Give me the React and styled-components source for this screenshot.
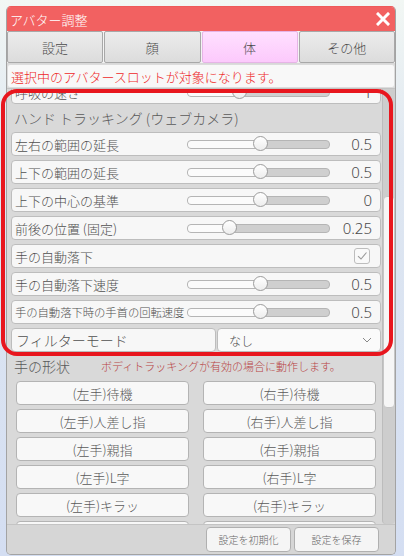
import React from 'react';
import styled, { createGlobalStyle, css } from 'styled-components';

const FONT = '"Noto Sans CJK JP", "Noto Sans", sans-serif';

const GlobalStyle = createGlobalStyle`
  html, body {
    margin: 0;
    padding: 0;
  }
  body {
    font-family: ${FONT};
    font-weight: 300;
    background: linear-gradient(180deg, #f2f7f4 0%, #dfe7f1 28%, #d4def2 100%);
  }
`;

const tabs = ['設定', '顔', '体', 'その他'];

const trackingRows = [
  { label: '左右の範囲の延長', pos: 0.5, value: '0.5' },
  { label: '上下の範囲の延長', pos: 0.5, value: '0.5' },
  { label: '上下の中心の基準', pos: 0.5, value: '0' },
  { label: '前後の位置 (固定)', pos: 0.265, value: '0.25' },
  { label: '手の自動落下', check: true },
  { label: '手の自動落下速度', pos: 0.5, value: '0.5' },
  { label: '手の自動落下時の手首の回転速度', pos: 0.5, value: '0.5', small: true },
];

const handShapes = ['待機', '人差し指', '親指', 'L字', 'キラッ', 'グー'];

const Slider = ({ pos }) => (
  <Track>
    <TrackFill style={{ width: `${7 + pos * 129}px` }} />
    <Knob style={{ left: `${pos * 129}px` }} />
  </Track>
);

const App = () => {
  return (
    <Page>
      <GlobalStyle />
      <Window>
        <TitleBar>
          <Title>アバター調整</Title>
          <Close>
            <svg width="14" height="14" viewBox="0 0 14 14">
              <path d="M2 2 L12 12 M12 2 L2 12" stroke="#fff" strokeWidth="3" strokeLinecap="square" />
            </svg>
          </Close>
        </TitleBar>
        <TabBar>
          {tabs.map((t) => (
            <Tab key={t} $active={t === '体'}>{t}</Tab>
          ))}
        </TabBar>
        <Notice>選択中のアバタースロットが対象になります。</Notice>
        <Body>
          <Scroll>
            <Content>
              <Row>
                <Label>呼吸の速さ</Label>
                <Slider pos={0.34} />
                <Value>1</Value>
              </Row>
              <SectionHeader>ハンド トラッキング (ウェブカメラ)</SectionHeader>
              {trackingRows.map((r) => (
                <Row key={r.label}>
                  <Label $small={r.small}>{r.label}</Label>
                  {r.check ? (
                    <CheckCell>
                      <CheckBox>
                        <svg width="12" height="12" viewBox="0 0 12 12">
                          <path d="M2 6.2 L5 9 L10.5 2.5" fill="none" stroke="#9a9a9a" strokeWidth="1.1" />
                        </svg>
                      </CheckBox>
                    </CheckCell>
                  ) : (
                    <>
                      <Slider pos={r.pos} />
                      <Value>{r.value}</Value>
                    </>
                  )}
                </Row>
              ))}
              <SelectRow>
                <SelectLabel>フィルターモード</SelectLabel>
                <Select>
                  <span>なし</span>
                  <svg width="10" height="6" viewBox="0 0 10 6">
                    <path d="M1 1 L5 5 L9 1" fill="none" stroke="#888" strokeWidth="1" />
                  </svg>
                </Select>
              </SelectRow>
              <SectionHeader $tight>
                手の形状
                <HeaderNote>ボディトラッキングが有効の場合に動作します。</HeaderNote>
              </SectionHeader>
              <ButtonGrid>
                {handShapes.map((s) => (
                  <React.Fragment key={s}>
                    <ShapeButton>(左手){s}</ShapeButton>
                    <ShapeButton>(右手){s}</ShapeButton>
                  </React.Fragment>
                ))}
              </ButtonGrid>
            </Content>
          </Scroll>
          <ScrollBar>
            <ScrollThumb />
          </ScrollBar>
        </Body>
        <Footer>
          <FooterButton>設定を初期化</FooterButton>
          <FooterButton>設定を保存</FooterButton>
        </Footer>
      </Window>
      <Annotation />
    </Page>
  );
};

const Page = styled.div`
  position: relative;
  width: 404px;
  height: 556px;
  overflow: hidden;
  padding: 6px 0 0 6px;
  box-sizing: border-box;
`;

const Window = styled.div`
  width: 390px;
  box-sizing: border-box;
  border: 1px solid #a3a3a3;
  border-top-color: #ee5a5a;
  border-radius: 5px;
  overflow: hidden;
  background: #d8d8d8;
  display: flex;
  flex-direction: column;
`;

const TitleBar = styled.div`
  height: 24px;
  background: #f26161;
  display: flex;
  align-items: center;
  justify-content: space-between;
  padding: 0 5px 0 3px;
`;

const Title = styled.div`
  color: #fff;
  font-size: 13px;
  line-height: 1;
`;

const Close = styled.div`
  display: flex;
  align-items: center;
`;

const TabBar = styled.div`
  display: grid;
  grid-template-columns: repeat(4, 1fr);
  gap: 1px;
  height: 32px;
  background: #f4f4f4;
`;

const Tab = styled.div`
  display: flex;
  align-items: center;
  justify-content: center;
  font-size: 13px;
  color: #4a4a4a;
  border: 1px solid #a8a8a8;
  border-radius: 2px;
  background: linear-gradient(180deg, #ececec 0%, #dcdcdc 100%);
  ${(p) =>
    p.$active &&
    css`
      background: linear-gradient(180deg, #ffe0ff 0%, #fcc9fc 100%);
      border-color: #e6b4e6;
    `}
`;

const Notice = styled.div`
  margin-top: 1px;
  height: 24px;
  box-sizing: border-box;
  background: #f8f8f8;
  border: 1px solid #dcdcdc;
  border-radius: 3px;
  display: flex;
  align-items: center;
  padding-left: 3px;
  font-size: 13px;
  color: #ee2a2a;
  white-space: nowrap;
`;

const Body = styled.div`
  height: 435px;
  display: flex;
  border-top: 1px solid #c4c4c4;
`;

const Scroll = styled.div`
  width: 375px;
  overflow: hidden;
  background: #d9d9d9;
`;

const Content = styled.div`
  margin-top: -9px;
  padding: 0 1px 0 4px;
  display: flex;
  flex-direction: column;
  gap: 4px;
`;

const rowBox = css`
  height: 24px;
  box-sizing: border-box;
  border: 1px solid #bdbdbd;
  border-radius: 4px;
  background: #f7f7f7;
`;

const Row = styled.div`
  ${rowBox};
  display: grid;
  grid-template-columns: 172px 143px 1fr;
  align-items: center;
  padding: 0 8px 0 3px;
`;

const Label = styled.div`
  font-size: ${(p) => (p.$small ? '11.4px' : '13px')};
  color: #505050;
  white-space: nowrap;
  letter-spacing: ${(p) => (p.$small ? '-0.1px' : '0')};
`;

const Value = styled.div`
  text-align: right;
  font-size: 15px;
  color: #4a4a4a;
  font-family: "Noto Sans", "DejaVu Sans", sans-serif;
  font-weight: 300;
`;

const Track = styled.div`
  position: relative;
  height: 7px;
  border: 1px solid #b5b5b5;
  border-radius: 4px;
  background: #cfcfcf;
`;

const TrackFill = styled.div`
  height: 100%;
  border-radius: 4px 0 0 4px;
  background: #fbfbfb;
`;

const Knob = styled.div`
  position: absolute;
  top: -5px;
  width: 15px;
  height: 15px;
  box-sizing: border-box;
  border-radius: 50%;
  border: 1px solid #9c9c9c;
  background: linear-gradient(180deg, #ffffff 0%, #ededed 100%);
`;

const CheckCell = styled.div`
  grid-column: 2 / 4;
  display: flex;
  justify-content: flex-end;
  padding-right: 2px;
`;

const CheckBox = styled.div`
  width: 16px;
  height: 16px;
  box-sizing: border-box;
  border: 1px solid #bdbdbd;
  border-radius: 3px;
  background: #f9f9f9;
  display: flex;
  align-items: center;
  justify-content: center;
`;

const SelectRow = styled.div`
  display: flex;
  gap: 1px;
  height: 24px;
`;

const SelectLabel = styled.div`
  ${rowBox};
  width: 205px;
  display: flex;
  align-items: center;
  padding-left: 4px;
  font-size: 14px;
  color: #505050;
`;

const Select = styled.div`
  ${rowBox};
  flex: 1;
  background: #fafafa;
  display: flex;
  align-items: center;
  justify-content: space-between;
  padding: 0 8px 0 11px;
  font-size: 12px;
  color: #4a4a4a;
`;

const SectionHeader = styled.div`
  height: 20px;
  display: flex;
  align-items: center;
  padding-left: 3px;
  font-size: 14px;
  color: #5a5a5a;
  white-space: nowrap;
  margin-bottom: ${(p) => (p.$tight ? '1px' : '0')};
`;

const HeaderNote = styled.span`
  margin-left: 31px;
  font-size: 11px;
  color: #b84444;
`;

const ButtonGrid = styled.div`
  display: grid;
  grid-template-columns: 1fr 1fr;
  column-gap: 14px;
  row-gap: 4px;
  padding: 0 5px;
`;

const ShapeButton = styled.div`
  height: 24px;
  box-sizing: border-box;
  border: 1px solid #b4b4b4;
  border-radius: 4px;
  background: #f8f8f8;
  display: flex;
  align-items: center;
  justify-content: center;
  font-size: 13px;
  color: #5a5a5a;
`;

const ScrollBar = styled.div`
  flex: 1;
  background: #cdcdcd;
  border-left: 1px solid #bcbcbc;
  border-radius: 0 0 4px 4px;
`;

const ScrollThumb = styled.div`
  margin-top: 107px;
  height: 212px;
  box-sizing: border-box;
  background: #f6f6f6;
  border: 1px solid #c6c6c6;
  border-radius: 4px;
`;

const Footer = styled.div`
  height: 29px;
  display: flex;
  justify-content: flex-end;
  align-items: center;
  gap: 3px;
  padding-right: 16px;
  background: #d6d6d6;
  border-top: 1px solid #c4c4c4;
`;

const FooterButton = styled.div`
  width: 85px;
  height: 25px;
  box-sizing: border-box;
  border: 1px solid #b0b0b0;
  border-radius: 4px;
  background: #f5f5f5;
  display: flex;
  align-items: center;
  justify-content: center;
  font-size: 10px;
  color: #666;
`;

const Annotation = styled.div`
  position: absolute;
  left: 1px;
  top: 89px;
  width: 392px;
  height: 267px;
  box-sizing: border-box;
  border: 4px solid #e8161e;
  border-radius: 16px;
  pointer-events: none;
`;

export default App;
